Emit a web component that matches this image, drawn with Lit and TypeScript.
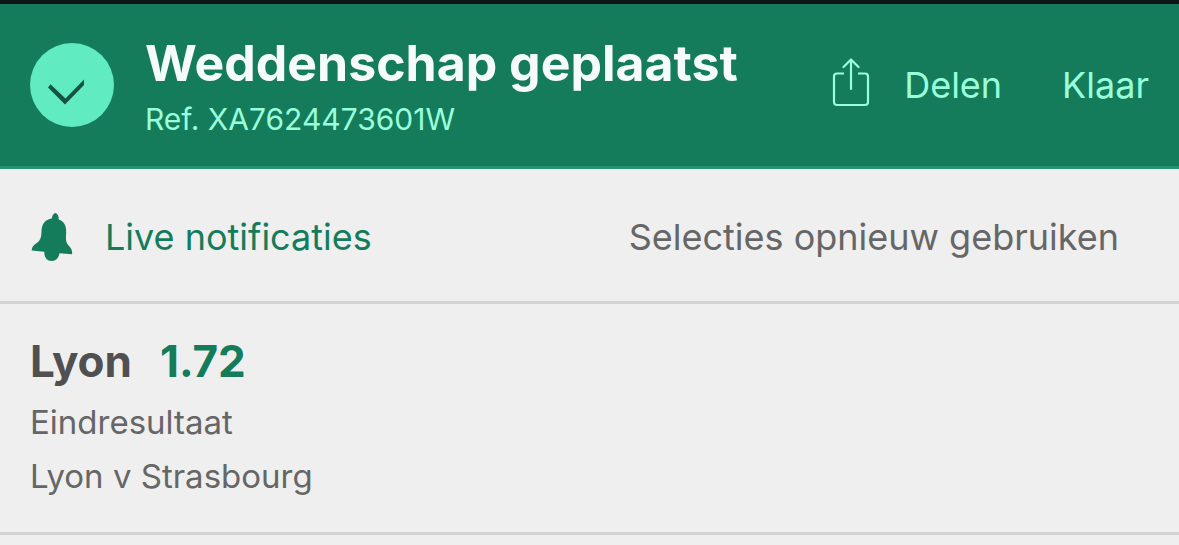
import { LitElement, html, css } from "lit";
import { customElement, property } from "lit/decorators.js";

@customElement("bet-receipt-header")
class BetReceiptHeader extends LitElement {
  @property() reference = "";

  static styles = css`
    :host {
      display: block;
    }
    .bar {
      display: flex;
      align-items: center;
      justify-content: space-between;
      gap: 32px;
      padding: 29px 30px;
      background: #147c5b;
      border-top: 4px solid #101517;
      border-bottom: 3px solid #289370;
    }
    .status,
    .actions,
    .action {
      display: flex;
      align-items: center;
    }
    .status {
      gap: 31px;
    }
    .badge {
      flex: none;
      width: 84px;
      height: 84px;
    }
    .headline {
      display: grid;
      gap: 8px;
    }
    h1 {
      margin: 0;
      font-size: 50px;
      line-height: 60px;
      font-weight: 700;
      color: #f5fbfa;
    }
    .reference {
      margin: 0;
      font-size: 30px;
      line-height: 36px;
      color: #9affdb;
    }
    .actions {
      gap: 60px;
    }
    .action {
      gap: 34px;
      padding: 0;
      border: 0;
      background: none;
      color: #9affdb;
      font: inherit;
      font-size: 36px;
      line-height: 44px;
      cursor: pointer;
    }
    .share {
      width: 38px;
      height: 54px;
    }
  `;

  render() {
    return html`
      <header class="bar">
        <div class="status">
          <svg class="badge" viewBox="0 0 84 84" aria-hidden="true">
            <circle cx="42" cy="42" r="42" fill="#60ebc0" />
            <path d="M18 44.5 L20.5 41.3 L35.5 55.5 L54 36.5 V42 L35 61.5 Z" fill="#14533f" />
          </svg>
          <div class="headline">
            <h1>Weddenschap geplaatst</h1>
            <p class="reference">Ref. ${this.reference}</p>
          </div>
        </div>
        <div class="actions">
          <button class="action" type="button">
            <svg
              class="share"
              viewBox="0 0 38 54"
              fill="none"
              stroke="currentColor"
              stroke-width="2.2"
              stroke-linecap="round"
              stroke-linejoin="round"
              aria-hidden="true"
            >
              <path stroke-linecap="butt" d="M12 15.5 H5 Q2 15.5 2 18.5 V44 Q2 47 5 47 H33 Q36 47 36 44 V18.5 Q36 15.5 33 15.5 H26" />
              <path d="M19 31 V1.5 M11.5 9 L19 1.5 L26.5 9" />
            </svg>
            <span>Delen</span>
          </button>
          <button class="action" type="button">Klaar</button>
        </div>
      </header>
    `;
  }
}

@customElement("bet-receipt-tools")
class BetReceiptTools extends LitElement {
  static styles = css`
    :host {
      display: block;
    }
    .tools {
      display: flex;
      align-items: center;
      justify-content: space-between;
      gap: 32px;
      padding: 44px 60px 40px 30px;
      border-bottom: 3px solid #d3d3d3;
    }
    .tool {
      display: flex;
      align-items: center;
      gap: 31px;
      padding: 0;
      border: 0;
      background: none;
      color: #666;
      font: inherit;
      font-size: 36px;
      line-height: 44px;
      cursor: pointer;
    }
    .live {
      color: #147c5b;
    }
    .bell {
      width: 44px;
      height: 48px;
    }
  `;

  render() {
    return html`
      <div class="tools">
        <button class="tool live" type="button">
          <svg class="bell" viewBox="0 0 44 48" fill="currentColor" aria-hidden="true">
            <path
              d="M25.3 0 C23.2 .6 22 3 21.8 5.6 C15 6.5 11.8 11.5 11.5 18 C11.3 22 11.3 25 9 28 C6.5 31 2 31.5 1.7 37.6 L14.3 38.7 C14.2 44 16.5 48 21.6 48 C26.5 48 28.6 44.5 29.5 40.3 L42 41.2 C43 35 38.5 33.5 36.8 30 C35.3 27 36.2 23 36.2 18.5 C36.2 12.5 34 8.5 28.7 6.6 C28.9 3.5 27.9 .8 25.3 0 Z"
            />
          </svg>
          <span>Live notificaties</span>
        </button>
        <button class="tool" type="button">Selecties opnieuw gebruiken</button>
      </div>
    `;
  }
}

@customElement("bet-selection")
class BetSelection extends LitElement {
  @property() name = "";
  @property() odds = "";
  @property() market = "";
  @property() fixture = "";

  static styles = css`
    :host {
      display: block;
    }
    .selection {
      padding: 23px 30px 29px;
      border-bottom: 3px solid #d3d3d3;
      color: #666;
    }
    .pick {
      display: flex;
      gap: 28px;
      font-size: 44px;
      line-height: 68px;
      font-weight: 700;
    }
    h2 {
      margin: 0;
      font: inherit;
      color: #505050;
    }
    .odds {
      color: #147c5b;
    }
    .detail {
      margin: 0;
      font-size: 33px;
      line-height: 54px;
    }
  `;

  render() {
    return html`
      <section class="selection">
        <div class="pick">
          <h2>${this.name}</h2>
          <span class="odds">${this.odds}</span>
        </div>
        <p class="detail">${this.market}</p>
        <p class="detail">${this.fixture}</p>
      </section>
    `;
  }
}

@customElement("app-root")
class AppRoot extends LitElement {
  static styles = css`
    :host {
      display: block;
      min-height: 100vh;
      background: #efefef;
      font-family: Inter, "Liberation Sans", sans-serif;
    }
  `;

  render() {
    return html`
      <bet-receipt-header reference="XA7624473601W"></bet-receipt-header>
      <main>
        <bet-receipt-tools></bet-receipt-tools>
        <bet-selection
          name="Lyon"
          odds="1.72"
          market="Eindresultaat"
          fixture="Lyon v Strasbourg"
        ></bet-selection>
      </main>
    `;
  }
}
